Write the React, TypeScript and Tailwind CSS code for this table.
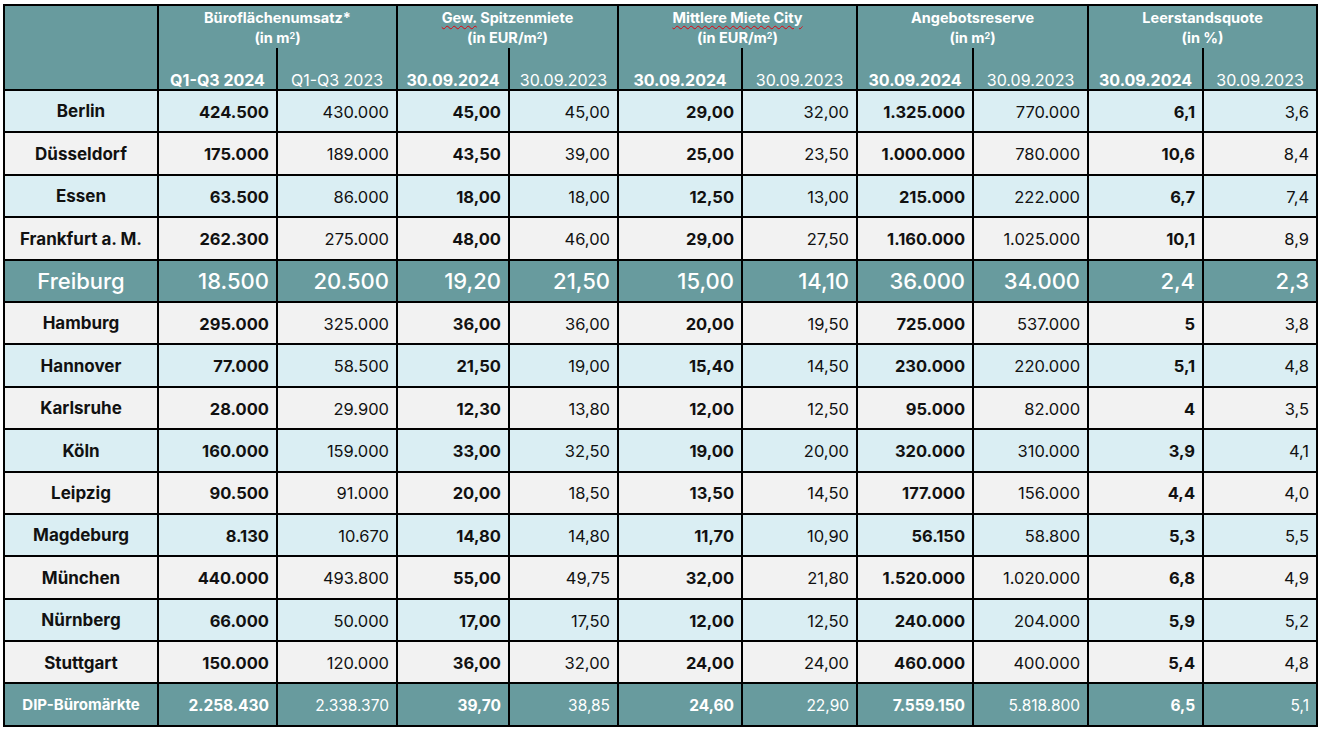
import React from "react";

type Row = { city: string; values: string[]; bg: "blue" | "gray" | "teal"; big?: boolean; total?: boolean };

const rows: Row[] = [
  { city: "Berlin", bg: "blue", values: ["424.500", "430.000", "45,00", "45,00", "29,00", "32,00", "1.325.000", "770.000", "6,1", "3,6"] },
  { city: "Düsseldorf", bg: "gray", values: ["175.000", "189.000", "43,50", "39,00", "25,00", "23,50", "1.000.000", "780.000", "10,6", "8,4"] },
  { city: "Essen", bg: "blue", values: ["63.500", "86.000", "18,00", "18,00", "12,50", "13,00", "215.000", "222.000", "6,7", "7,4"] },
  { city: "Frankfurt a. M.", bg: "gray", values: ["262.300", "275.000", "48,00", "46,00", "29,00", "27,50", "1.160.000", "1.025.000", "10,1", "8,9"] },
  { city: "Freiburg", bg: "teal", big: true, values: ["18.500", "20.500", "19,20", "21,50", "15,00", "14,10", "36.000", "34.000", "2,4", "2,3"] },
  { city: "Hamburg", bg: "gray", values: ["295.000", "325.000", "36,00", "36,00", "20,00", "19,50", "725.000", "537.000", "5", "3,8"] },
  { city: "Hannover", bg: "blue", values: ["77.000", "58.500", "21,50", "19,00", "15,40", "14,50", "230.000", "220.000", "5,1", "4,8"] },
  { city: "Karlsruhe", bg: "gray", values: ["28.000", "29.900", "12,30", "13,80", "12,00", "12,50", "95.000", "82.000", "4", "3,5"] },
  { city: "Köln", bg: "blue", values: ["160.000", "159.000", "33,00", "32,50", "19,00", "20,00", "320.000", "310.000", "3,9", "4,1"] },
  { city: "Leipzig", bg: "gray", values: ["90.500", "91.000", "20,00", "18,50", "13,50", "14,50", "177.000", "156.000", "4,4", "4,0"] },
  { city: "Magdeburg", bg: "blue", values: ["8.130", "10.670", "14,80", "14,80", "11,70", "10,90", "56.150", "58.800", "5,3", "5,5"] },
  { city: "München", bg: "gray", values: ["440.000", "493.800", "55,00", "49,75", "32,00", "21,80", "1.520.000", "1.020.000", "6,8", "4,9"] },
  { city: "Nürnberg", bg: "blue", values: ["66.000", "50.000", "17,00", "17,50", "12,00", "12,50", "240.000", "204.000", "5,9", "5,2"] },
  { city: "Stuttgart", bg: "gray", values: ["150.000", "120.000", "36,00", "32,00", "24,00", "24,00", "460.000", "400.000", "5,4", "4,8"] },
  { city: "DIP-Büromärkte", bg: "teal", total: true, values: ["2.258.430", "2.338.370", "39,70", "38,85", "24,60", "22,90", "7.559.150", "5.818.800", "6,5", "5,1"] },
];

const groups = [
  { title: <>Büroflächenumsatz*</>, unit: <>(in m<sup className="text-[9px]">2</sup>)</>, sub: ["Q1-Q3 2024", "Q1-Q3 2023"] },
  {
    title: <span className="underline decoration-wavy decoration-red-600 decoration-1 underline-offset-2">Gew.</span>,
    rest: " Spitzenmiete",
    unit: <>(in EUR/m<sup className="text-[9px]">2</sup>)</>,
    sub: ["30.09.2024", "30.09.2023"],
  },
  {
    title: <span className="underline decoration-wavy decoration-red-600 decoration-1 underline-offset-2">Mittlere Miete City</span>,
    unit: <>(in EUR/m<sup className="text-[9px]">2</sup>)</>,
    sub: ["30.09.2024", "30.09.2023"],
  },
  { title: <>Angebotsreserve</>, unit: <>(in m<sup className="text-[9px]">2</sup>)</>, sub: ["30.09.2024", "30.09.2023"] },
  { title: <>Leerstandsquote</>, unit: <>(in %)</>, sub: ["30.09.2024", "30.09.2023"] },
];

const widths = [154, 119, 120, 112, 109, 124, 115, 116, 115, 115, 114];

const bgClass = { blue: "bg-[#daeef3]", gray: "bg-[#f2f2f2]", teal: "bg-[#689b9e]" };

export default function App() {
  return (
    <div className="min-h-screen bg-white pl-[3px] pt-[4px] font-['Inter',sans-serif] text-[#111]">
      <table className="table-fixed border-collapse border-2 border-black" style={{ width: 1314 }}>
        <colgroup>
          {widths.map((w, i) => (
            <col key={i} style={{ width: w }} />
          ))}
        </colgroup>
        <thead className="bg-[#689b9e] text-white">
          <tr className="h-[43px]">
            <th rowSpan={2} className="border-2 border-black"></th>
            {groups.map((g, i) => (
              <th key={i} colSpan={2} className="border-x-2 border-black pt-[2px] align-top text-[14.5px] font-bold leading-[20px]">
                <div>
                  {g.title}
                  {g.rest}
                </div>
                <div>{g.unit}</div>
              </th>
            ))}
          </tr>
          <tr className="h-[42px]">
            {groups.map((g, i) =>
              g.sub.map((s, j) => (
                <th
                  key={`${i}-${j}`}
                  className={`border-b-2 border-black pb-0 align-bottom text-[16px] leading-[18px] ${
                    j === 0 ? "border-l-2 font-bold" : "border-l-2 border-r-2 font-normal"
                  }`}
                >
                  {s}
                </th>
              ))
            )}
          </tr>
        </thead>
        <tbody>
          {rows.map((r) => {
            const light = r.bg === "teal";
            return (
              <tr key={r.city} className={`h-[42.4px] ${bgClass[r.bg]} ${light ? "text-white" : ""}`}>
                <td
                  className={`border-2 border-black pt-[2px] text-center ${
                    r.big ? "text-[22px] font-medium" : r.total ? "text-[15px] font-bold" : "text-[17px] font-bold"
                  }`}
                >
                  {r.city}
                </td>
                {r.values.map((v, i) => (
                  <td
                    key={i}
                    className={`border-2 border-black pr-[7px] pt-[2px] text-right ${
                      r.big
                        ? "text-[22px] font-medium"
                        : r.total
                        ? `text-[15.5px] ${i % 2 === 0 ? "font-bold" : "font-normal"}`
                        : `text-[16.5px] ${i % 2 === 0 ? "font-bold" : "font-normal"}`
                    }`}
                  >
                    {v}
                  </td>
                ))}
              </tr>
            );
          })}
        </tbody>
      </table>
    </div>
  );
}
